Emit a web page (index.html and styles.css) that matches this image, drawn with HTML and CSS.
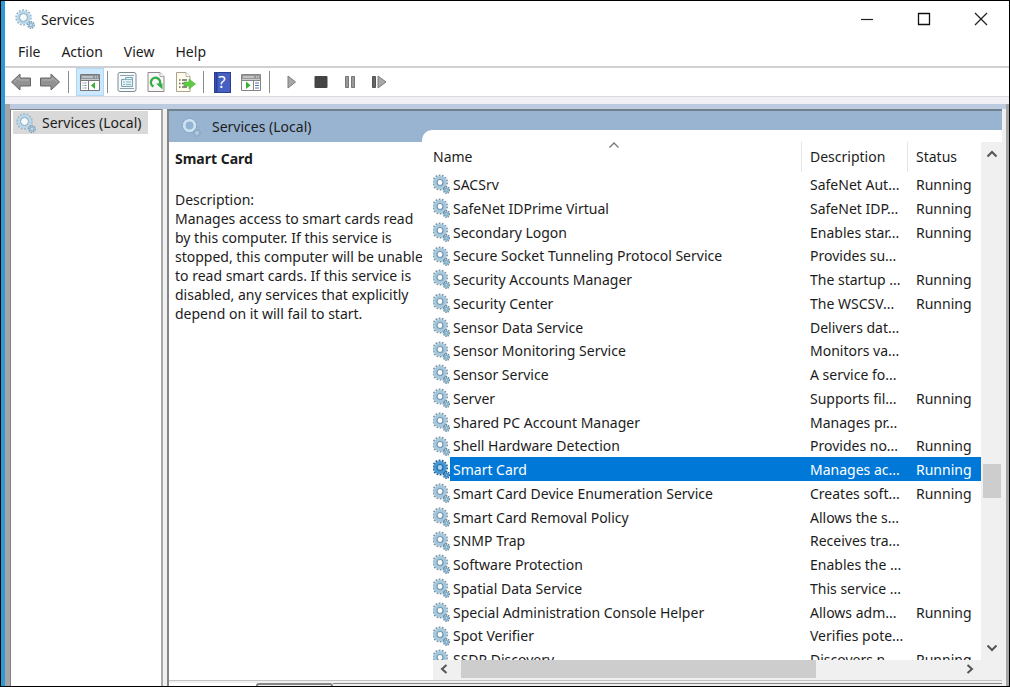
FILE: index.html
```html
<!DOCTYPE html>
<html lang="en">
<head>
<meta charset="utf-8">
<title>Services</title>
<link rel="stylesheet" href="styles.css">
</head>
<body>
<svg class="defs" aria-hidden="true">
  <symbol id="gear" viewBox="0 0 17 20">
    <circle cx="7" cy="8.500" r="7" fill="none" stroke="#7895a8" stroke-width="2" stroke-dasharray="1.8 1.34"/>
    <circle cx="7" cy="8.500" r="4.700" fill="#fff" stroke="#a6c8dd" stroke-width="3.800"/>
    <circle cx="7" cy="8.500" r="3" fill="#fff" stroke="#6f95ae" stroke-width="1.200"/>
    <circle cx="13.500" cy="16" r="3" fill="none" stroke="#6a8ba0" stroke-width="1.800" stroke-dasharray="1.3 .9"/>
    <circle cx="13.500" cy="16" r="1.600" fill="#cfe2ec" stroke="#86b1ca" stroke-width="1.800"/>
  </symbol>
  <symbol id="gear-selected" viewBox="0 0 17 20">
    <circle cx="7" cy="8.500" r="7" fill="none" stroke="#1f5f95" stroke-width="2" stroke-dasharray="1.8 1.34"/>
    <circle cx="7" cy="8.500" r="4.700" fill="#fff" stroke="#4796d2" stroke-width="3.800"/>
    <circle cx="7" cy="8.500" r="3" fill="#a9d0ee" stroke="#1d6aaa" stroke-width="1.200"/>
    <circle cx="13.500" cy="16" r="3" fill="none" stroke="#1f5f95" stroke-width="1.800" stroke-dasharray="1.3 .9"/>
    <circle cx="13.500" cy="16" r="1.600" fill="#8dc3e8" stroke="#3c8cc9" stroke-width="1.800"/>
  </symbol>
  <symbol id="gear-light" viewBox="0 0 20 20">
    <circle cx="8.500" cy="8.500" r="7.400" fill="none" stroke="#9dbacd" stroke-width="1.800" stroke-dasharray="2 1.320"/>
    <circle cx="8.500" cy="8.500" r="5.400" fill="#f7fafc" stroke="#b9d7e8" stroke-width="2.800"/>
    <circle cx="8.500" cy="8.500" r="4" fill="none" stroke="#84a8c1" stroke-width="1"/>
    <circle cx="16" cy="16" r="3.200" fill="none" stroke="#7d9fb5" stroke-width="1.600" stroke-dasharray="1.4 1"/>
    <circle cx="16" cy="16" r="1.800" fill="#dbeaf2" stroke="#93bad1" stroke-width="1.800"/>
  </symbol>
  <symbol id="gear-pale" viewBox="0 0 20 20">
    <circle cx="8.500" cy="8.500" r="7.400" fill="none" stroke="#88abc9" stroke-width="1.400" stroke-dasharray="2.300 1.500"/>
    <circle cx="8.500" cy="8.500" r="5.300" fill="#93b3d2" stroke="#cfe3f1" stroke-width="2.600"/>
    <circle cx="16" cy="16" r="3" fill="none" stroke="#7fa2bf" stroke-width="1.400" stroke-dasharray="1.4 1"/>
    <circle cx="16" cy="16" r="1.700" fill="#b5d0e2" stroke="#a4c4db" stroke-width="1.400"/>
  </symbol>
</svg>
<main class="window">
  <header class="titlebar">
    <svg class="icon20"><use href="#gear-light"/></svg>
    <h1 class="title">Services</h1>
    <button class="caption" aria-label="Minimize"><svg width="14" height="14"><path d="M1 7.500H13" stroke="#222" stroke-width="1.200"/></svg></button>
    <button class="caption" aria-label="Maximize"><svg width="14" height="14"><path d="M1.500 1.500H12.500V12.500H1.500Z" fill="none" stroke="#111" stroke-width="1.300"/></svg></button>
    <button class="caption" aria-label="Close"><svg width="14" height="14"><path d="M1 1L13 13M13 1L1 13" stroke="#222" stroke-width="1.300"/></svg></button>
  </header>
  <nav class="menubar">
    <button class="menu">File</button>
    <button class="menu">Action</button>
    <button class="menu">View</button>
    <button class="menu">Help</button>
  </nav>
  <div class="toolbar" role="toolbar">
    <button class="tool" aria-label="Back"><svg width="22" height="20"><path d="M1.500 10L10 2V6H20.500V14H10V18Z" fill="#929292" stroke="#666"/><path d="M4 10L9 5.500V8H19" fill="none" stroke="#b0b0b0"/></svg></button>
    <button class="tool" aria-label="Forward"><svg width="22" height="20"><path d="M20.500 10L12 2V6H1.500V14H12V18Z" fill="#929292" stroke="#666"/><path d="M18 10L13 5.500V8H3" fill="none" stroke="#b0b0b0"/></svg></button>
    <span class="rule"></span>
    <button class="tool tool-on" aria-label="Show or hide console tree"><svg width="20" height="17"><path d="M.5.5H19.500V16.500H.5Z" fill="#fff" stroke="#777"/><path d="M1 1H19V5.500H1Z" fill="#8d959b"/><path d="M2 3H13M15 3H16M17 3H18" stroke="#e8eef2"/><path d="M8.500 6V16" stroke="#777"/><path d="M1 6.500H19" stroke="#777"/><path d="M2.500 9H6.500M2.500 11.500H6.500M2.500 14H6.500" stroke="#6d8296" stroke-dasharray="1 1 3"/><path d="M15 8V15L11 11.500Z" fill="#37b034"/></svg></button>
    <span class="rule rule-near"></span>
    <button class="tool" aria-label="Properties"><svg width="20" height="20"><rect x="1" y=".5" width="18" height="19" rx="2" fill="#f6fafb" stroke="#7b8a92"/><path d="M3 3.500H17M3 16.500H17" stroke="#8ca2ae"/><path d="M4.500 7.500H8.500V5.500H15.500V14.500H4.500Z" fill="#e7f3f6" stroke="#78a4b2"/><path d="M6 10H8M9 10H14M6 12.500H8M9 12.500H14M9 7.500H15" stroke="#86b4c2"/></svg></button>
    <button class="tool" aria-label="Refresh"><svg width="18" height="20"><path d="M1 .5H13L17 4.500V19.500H1Z" fill="#f8f6f6" stroke="#8f8989"/><path d="M13 .5V4.500H17" fill="#fff" stroke="#aaa"/><path d="M6.500 14.500A4.600 4.600 0 1 1 12.800 12" fill="none" stroke="#32ad43" stroke-width="2.400"/><path d="M9 11.500H15.500V17.500Z" fill="#32ad43"/></svg></button>
    <button class="tool" aria-label="Export list"><svg width="21" height="20"><path d="M1.500.5H11L15 4.500V19.500H1.500Z" fill="#fffcec" stroke="#aaa391"/><path d="M11 .5V4.500H15" fill="#fff" stroke="#bbb5a3"/><path d="M4 8H5.500M4 11.500H5.500M4 15H5.500M7 8H12M7 11.500H10M7 15H12" stroke="#666" stroke-width="1.300"/><path d="M9 10H14V7L20.500 12L14 17V14H9Z" fill="#5fcb45" stroke="#4bb137" stroke-width=".6"/></svg></button>
    <span class="rule"></span>
    <button class="tool" aria-label="Help"><svg width="17" height="21"><rect x=".5" y=".5" width="16" height="20" fill="#4560c0" stroke="#2c3f8c"/><path d="M2.500 1V20" stroke="#2b3f9c" stroke-width="2"/></svg><span class="mark">?</span></button>
    <button class="tool" aria-label="Show or hide action pane"><svg width="20" height="17"><path d="M.5.5H19.500V16.500H.5Z" fill="#fff" stroke="#858585"/><path d="M1 1H19V5.500H1Z" fill="#989898"/><path d="M2 3H13M15 3H16M17 3H18" stroke="#eee"/><path d="M12.500 6V16M1 6.500H19" stroke="#858585"/><path d="M14 9H18M14 11.500H18M14 14H18" stroke="#4e79b4"/><path d="M5 7.500V15L9.500 11.300Z" fill="#37b034"/></svg></button>
    <span class="rule rule-wide"></span>
    <button class="tool" aria-label="Start service"><svg width="10" height="14"><path d="M1 1V13L8.500 7Z" fill="#a8a8a8" stroke="#7c7c7c"/></svg></button>
    <button class="tool" aria-label="Stop service"><svg width="14" height="14"><rect x=".5" y="1" width="13" height="12" rx="1" fill="#444"/></svg></button>
    <button class="tool" aria-label="Pause service"><svg width="12" height="14"><path d="M1.500 1.500H4.500V12.500H1.500ZM7.500 1.500H10.500V12.500H7.500Z" fill="#999" stroke="#777"/></svg></button>
    <button class="tool" aria-label="Restart service"><svg width="16" height="14"><path d="M1.500 1.500H4.500V12.500H1.500Z" fill="#666" stroke="#555"/><path d="M7 1V13L15 7Z" fill="#a8a8a8" stroke="#7c7c7c"/></svg></button>
  </div>
  <div class="workspace">
    <aside class="tree">
      <button class="node"><svg class="icon20"><use href="#gear-light"/></svg>Services (Local)</button>
    </aside>
    <div class="content">
      <section class="pane">
        <h2 class="pane-title"><svg class="icon20"><use href="#gear-pale"/></svg>Services (Local)</h2>
        <div class="details">
          <h3 class="service">Smart Card</h3>
          <p class="about">Description:<br>Manages access to smart cards read<br>by this computer. If this service is<br>stopped, this computer will be unable<br>to read smart cards. If this service is<br>disabled, any services that explicitly<br>depend on it will fail to start.</p>
        </div>
        <div class="sheet">
          <div class="list">
            <table class="services">
              <colgroup><col class="c-icon"><col><col class="c-desc"><col class="c-status"></colgroup>
              <thead><tr><th colspan="2">Name<svg class="sort" width="12" height="8"><path d="M1.500 6.500L6 2L10.500 6.500" fill="none" stroke="#777" stroke-width="1.300"/></svg></th><th>Description</th><th>Status</th></tr></thead>
              <tbody>
                <tr><td><svg><use href="#gear"/></svg></td><td>SACSrv</td><td>SafeNet Aut...</td><td>Running</td></tr>
                <tr><td><svg><use href="#gear"/></svg></td><td>SafeNet IDPrime Virtual</td><td>SafeNet IDP...</td><td>Running</td></tr>
                <tr><td><svg><use href="#gear"/></svg></td><td>Secondary Logon</td><td>Enables star...</td><td>Running</td></tr>
                <tr><td><svg><use href="#gear"/></svg></td><td>Secure Socket Tunneling Protocol Service</td><td>Provides su...</td><td></td></tr>
                <tr><td><svg><use href="#gear"/></svg></td><td>Security Accounts Manager</td><td>The startup ...</td><td>Running</td></tr>
                <tr><td><svg><use href="#gear"/></svg></td><td>Security Center</td><td>The WSCSV...</td><td>Running</td></tr>
                <tr><td><svg><use href="#gear"/></svg></td><td>Sensor Data Service</td><td>Delivers dat...</td><td></td></tr>
                <tr><td><svg><use href="#gear"/></svg></td><td>Sensor Monitoring Service</td><td>Monitors va...</td><td></td></tr>
                <tr><td><svg><use href="#gear"/></svg></td><td>Sensor Service</td><td>A service fo...</td><td></td></tr>
                <tr><td><svg><use href="#gear"/></svg></td><td>Server</td><td>Supports fil...</td><td>Running</td></tr>
                <tr><td><svg><use href="#gear"/></svg></td><td>Shared PC Account Manager</td><td>Manages pr...</td><td></td></tr>
                <tr><td><svg><use href="#gear"/></svg></td><td>Shell Hardware Detection</td><td>Provides no...</td><td>Running</td></tr>
                <tr class="selected"><td><svg><use href="#gear-selected"/></svg></td><td>Smart Card</td><td>Manages ac...</td><td>Running</td></tr>
                <tr><td><svg><use href="#gear"/></svg></td><td>Smart Card Device Enumeration Service</td><td>Creates soft...</td><td>Running</td></tr>
                <tr><td><svg><use href="#gear"/></svg></td><td>Smart Card Removal Policy</td><td>Allows the s...</td><td></td></tr>
                <tr><td><svg><use href="#gear"/></svg></td><td>SNMP Trap</td><td>Receives tra...</td><td></td></tr>
                <tr><td><svg><use href="#gear"/></svg></td><td>Software Protection</td><td>Enables the ...</td><td></td></tr>
                <tr><td><svg><use href="#gear"/></svg></td><td>Spatial Data Service</td><td>This service ...</td><td></td></tr>
                <tr><td><svg><use href="#gear"/></svg></td><td>Special Administration Console Helper</td><td>Allows adm...</td><td>Running</td></tr>
                <tr><td><svg><use href="#gear"/></svg></td><td>Spot Verifier</td><td>Verifies pote...</td><td></td></tr>
                <tr><td><svg><use href="#gear"/></svg></td><td>SSDP Discovery</td><td>Discovers n...</td><td>Running</td></tr>
              </tbody>
            </table>
          </div>
          <div class="vscroll">
            <button class="arrow" aria-label="Scroll up"><svg width="12" height="10"><path d="M1.500 7.500L6 3L10.500 7.500" fill="none" stroke="#555" stroke-width="2"/></svg></button>
            <span class="space-before"></span><span class="thumb"></span><span class="space-after"></span>
            <button class="arrow" aria-label="Scroll down"><svg width="12" height="10"><path d="M1.500 2.500L6 7L10.500 2.500" fill="none" stroke="#555" stroke-width="2"/></svg></button>
          </div>
          <div class="hscroll">
            <button class="arrow" aria-label="Scroll left"><svg width="10" height="12"><path d="M7.500 2L3 6L7.500 10" fill="none" stroke="#555" stroke-width="2"/></svg></button>
            <span class="thumb"></span><span class="space-after"></span>
            <button class="arrow" aria-label="Scroll right"><svg width="10" height="12"><path d="M2.500 2L7 6L2.500 10" fill="none" stroke="#555" stroke-width="2"/></svg></button>
          </div>
        </div>
      </section>
      <div class="tabs"><span class="tab-active"></span><span class="tab"></span><span class="tab-rest"></span></div>
    </div>
  </div>
</main>
</body>
</html>
```
FILE: styles.css
```css
* { box-sizing: border-box; }
body {
  margin: 0;
  height: 100vh;
  background: #000;
  padding: 1px;
  font: 14px/19px "Noto Sans", "Open Sans", sans-serif;
  color: #1c1c1c;
}
button { border: 0; padding: 0; background: none; font: inherit; color: inherit; }
svg { display: block; flex: none; }
h1, h2, h3, p { margin: 0; font-size: 14px; font-weight: 400; }
.defs { position: absolute; width: 0; height: 0; }
.icon20 { width: 20px; height: 20px; }

.window {
  height: 100%;
  display: flex;
  flex-direction: column;
  background: #fff;
  border-left: 4px solid #2b9bd8;
}
.titlebar { display: flex; align-items: center; height: 36px; padding-left: 10px; }
.title { flex: 1; padding-left: 6px; }
.caption { width: 57px; height: 36px; display: grid; place-items: center; }
.menubar { display: flex; gap: 21px; height: 31px; padding: 0 13px; align-items: center; border-bottom: 2px solid #d0d0d3; }
.toolbar { display: flex; align-items: center; height: 29px; padding-left: 5px; gap: 7px; border-bottom: 1px solid #dcdce0; }
.tool { position: relative; width: 22px; height: 28px; display: grid; place-items: center; }
.tool-on { width: 28px; background: #cce8ff; outline: 1px solid #b0d9f5; outline-offset: -1px; }
.tool-on + .rule { margin-left: -4px; }
.rule { width: 1px; height: 22px; background: #8c8c8c; }
.rule-near { margin-right: 1px; }
.rule-wide { margin-right: 4px; }
.mark { position: absolute; inset: 0; color: #fff; font-size: 17px; line-height: 28px; text-align: center; }

.workspace {
  flex: 1;
  min-height: 0;
  margin-top: 7px;
  display: flex;
  gap: 4px;
  padding: 5px 4px 0 5px;
  background: #f0f0f0;
  border-right: 3px solid #a5a5a5;
  box-shadow: inset 5px 0 #a5a5a5, inset 0 5px #bccbdf, 0 -7px #f0f0f5;
}
.tree { width: 153px; background: #fff; border: 1px solid #827f86; border-right: 2px solid #a9a9a9; border-bottom: 0; }
.node { display: flex; align-items: center; gap: 6px; height: 23px; margin: 1px 0 0 2px; padding: 0 7px 0 3px; background: #d9d9d9; }
.content { flex: 1; min-width: 0; display: flex; flex-direction: column; border-left: 2px solid #858585; border-top: 2px solid #71808f; }
.pane { flex: 1; min-height: 0; display: grid; grid-template: 19px 12px minmax(0, 1fr) / 253px minmax(0, 1fr); background: #fff; }
.pane-title { grid-area: 1 / 1 / 3 / 3; display: flex; align-items: center; gap: 11px; padding-left: 12px; background: #99b4d1; }
.details { grid-area: 3 / 1; padding: 7px 0 0 6px; white-space: nowrap; }
.service { font-weight: 700; }
.about { padding-top: 22px; }

.sheet { grid-area: 2 / 2 / 4 / 3; display: grid; grid-template: 12px minmax(0, 1fr) 20px / minmax(0, 1fr) 21px; background: #fff; border-top-left-radius: 10px; }
.list { grid-area: 1 / 1 / 3 / 2; padding-left: 10px; overflow: hidden; }
.services { width: 100%; table-layout: fixed; border-collapse: collapse; white-space: nowrap; }
.c-icon { width: 18px; }
.c-desc { width: 106px; }
.c-status { width: 74px; }
.services th { position: relative; height: 42px; padding: 11px 0 0 9px; font-weight: 400; text-align: left; background: linear-gradient(#e5e5e5, #e5e5e5) 0 100% / 1px 30px no-repeat; }
.services th:first-child { padding-left: 1px; background: none; }
.sort { position: absolute; left: 50%; top: 11px; margin-left: -9px; }
.services td { height: 24px; padding: 0 0 0 9px; }
.services tr:nth-child(4n) td { height: 23px; }
.services td:first-child { padding: 0 0 0 1px; }
.services td:nth-child(2) { padding-left: 3px; }
.services td svg { width: 17px; height: 20px; }
.selected td:not(:first-child) { background: #0078d7; color: #fff; }

.vscroll { grid-area: 2 / 2; display: flex; flex-direction: column; padding: 0 1px 0 2px; background: #f0f0f0; }
.hscroll { grid-area: 3 / 1 / 4 / 3; display: flex; margin-left: 11px; padding: 0 21px 2px 0; background: #f0f0f0; }
.arrow { width: 18px; height: 24px; display: grid; place-items: center; }
.hscroll .arrow { width: 22px; height: 18px; }
.thumb { background: #cdcdcd; }
.vscroll .thumb { height: 34px; }
.vscroll .space-before { flex: 298; }
.vscroll .space-after { flex: 138; }
.hscroll .thumb { flex: 356; margin-left: 6px; }
.hscroll .space-after { flex: 143; }

.tabs { display: flex; height: 6px; padding-top: 2px; border-top: 1px solid #c4c4c4; }
.tab-active { width: 87px; background: #fff; }
.tab { width: 77px; border: 2px solid #858585; border-bottom: 0; border-radius: 3px 3px 0 0; }
.tab-rest { flex: 1; border-top: 1px solid #858585; }
```
